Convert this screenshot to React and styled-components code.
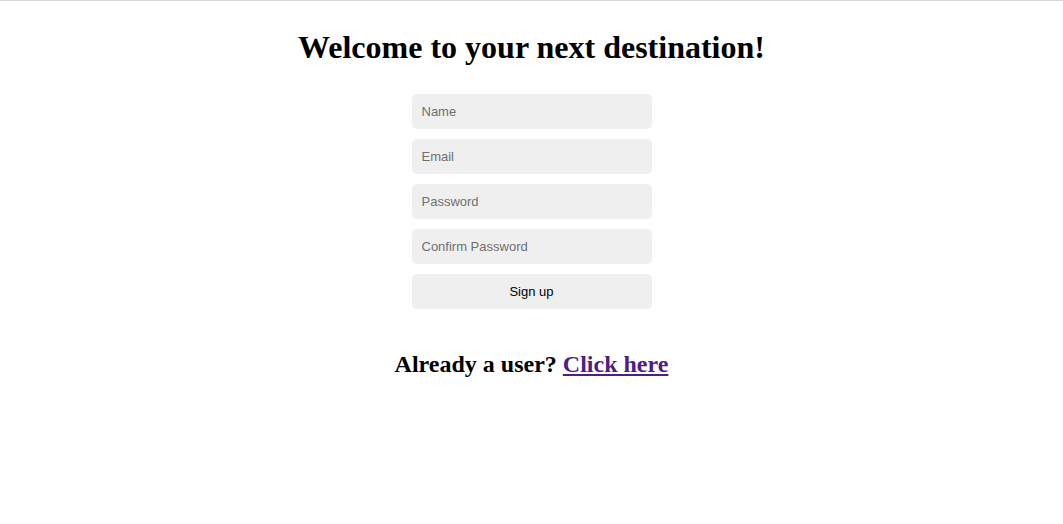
import React from 'react'
import styled, { createGlobalStyle } from 'styled-components'

const GlobalStyle = createGlobalStyle`
  html, body {
    margin: 0;
    padding: 0;
    background: #fff;
  }
  body {
    font-family: "Liberation Serif", "Times New Roman", serif;
    border-top: 1px solid #d8d8dc;
  }
`

const Page = styled.div`
  display: flex;
  flex-direction: column;
  align-items: center;
  padding-top: 28px;
`

const Title = styled.h1`
  margin: 0;
  font-size: 32px;
  font-weight: bold;
  line-height: 37px;
  color: #000;
`

const Form = styled.form`
  display: flex;
  flex-direction: column;
  gap: 10px;
  width: 240px;
  margin-top: 28px;
`

const Field = styled.input`
  box-sizing: border-box;
  width: 100%;
  height: 35px;
  padding: 0 10px;
  border: none;
  border-radius: 5px;
  background: #efefef;
  font-family: "Liberation Sans", Arial, sans-serif;
  font-size: 13px;
  color: #000;
  outline: none;

  &::placeholder {
    color: #6f6f6f;
  }
`

const Submit = styled.button`
  box-sizing: border-box;
  width: 100%;
  height: 35px;
  border: none;
  border-radius: 5px;
  background: #efefef;
  font-family: "Liberation Sans", Arial, sans-serif;
  font-size: 13px;
  color: #000;
  cursor: pointer;
`

const Footer = styled.h2`
  margin: 41px 0 0;
  font-size: 24px;
  font-weight: bold;
  line-height: 28px;
  color: #000;
`

const Link = styled.a`
  color: #4f1d85;
  text-decoration: underline;
`

const App = () => {
  return (
    <>
      <GlobalStyle />
      <Page>
        <Title>Welcome to your next destination!</Title>
        <Form onSubmit={e => e.preventDefault()}>
          <Field type="text" placeholder="Name" />
          <Field type="email" placeholder="Email" />
          <Field type="password" placeholder="Password" />
          <Field type="password" placeholder="Confirm Password" />
          <Submit type="submit">Sign up</Submit>
        </Form>
        <Footer>
          Already a user? <Link href="#">Click here</Link>
        </Footer>
      </Page>
    </>
  )
}

export default App
